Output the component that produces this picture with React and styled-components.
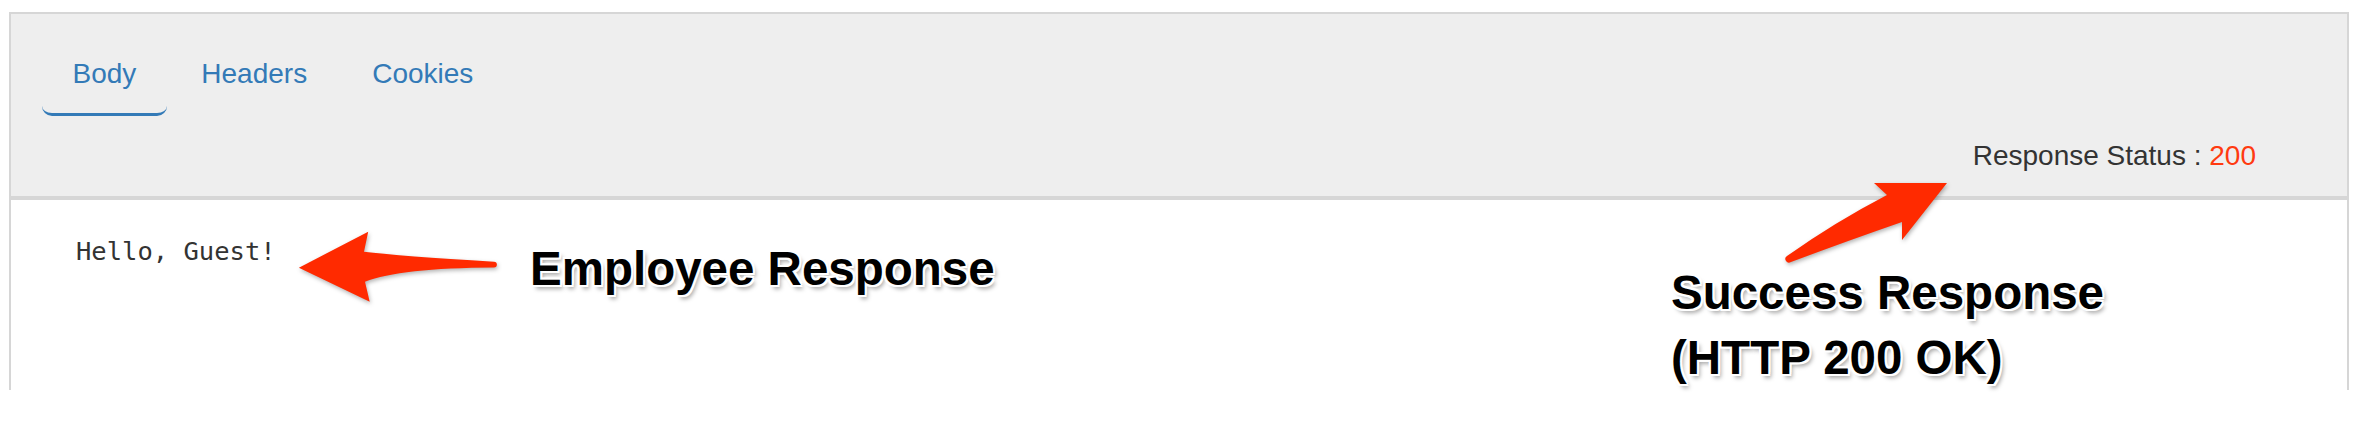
import React from "react";
import styled, { createGlobalStyle } from "styled-components";

const GlobalStyle = createGlobalStyle`
  html, body {
    margin: 0;
    padding: 0;
    background: #ffffff;
  }
  body {
    font-family: "Liberation Sans", Arial, Helvetica, sans-serif;
  }
`;

const Page = styled.div`
  position: relative;
  height: 440px;
  padding: 12px 17px 0 9px;
  box-sizing: border-box;
  overflow: hidden;
`;

const Panel = styled.div`
  height: 378px;
  border: 2px solid #d6d6d6;
  border-bottom: none;
  box-sizing: border-box;
  display: flex;
  flex-direction: column;
`;

const ResponseHeader = styled.div`
  height: 138px;
  background: #eeeeee;
  border-bottom: 4px solid #d6d6d6;
  display: flex;
  flex-direction: column;
  padding: 44px 0 0 31px;
  box-sizing: content-box;
  flex-shrink: 0;
`;

const TabList = styled.ul`
  list-style: none;
  margin: 0;
  padding: 0;
  display: flex;
  gap: 4px;
`;

const Tab = styled.li`
  padding: 0 30.5px 22.5px;
  font-size: 28px;
  line-height: 32px;
  color: #337ab7;
  border-bottom: 3px solid ${(p) => (p.$active ? "#337ab7" : "transparent")};
  border-radius: 0 0 10px 10px;
  cursor: pointer;
`;

const StatusRow = styled.div`
  margin-top: 24px;
  padding-right: 91px;
  text-align: right;
  font-size: 28px;
  line-height: 32px;
  color: #333333;
`;

const StatusCode = styled.span`
  color: #ff3a10;
`;

const ResponseBody = styled.div`
  flex: 1;
  background: #ffffff;
  padding: 36px 0 0 65px;
`;

const BodyText = styled.pre`
  margin: 0;
  font-family: "DejaVu Sans Mono", "Liberation Mono", monospace;
  font-size: 25.5px;
  line-height: 30px;
  color: #333333;
`;

const Callout = styled.div`
  position: absolute;
  left: ${(p) => p.$x}px;
  top: ${(p) => p.$y}px;
  font-family: "Liberation Sans", Arial, Helvetica, sans-serif;
  font-weight: bold;
  font-size: 47.5px;
  line-height: ${(p) => p.$lineHeight || 47.5}px;
  color: #000000;
  white-space: nowrap;
  text-shadow:
    2px 0 0 #fff, -2px 0 0 #fff, 0 2px 0 #fff, 0 -2px 0 #fff,
    2px 2px 0 #fff, -2px -2px 0 #fff, 2px -2px 0 #fff, -2px 2px 0 #fff,
    3px 4px 4px rgba(0, 0, 0, 0.35);
`;

const ArrowSvg = styled.svg`
  position: absolute;
  left: ${(p) => p.$x}px;
  top: ${(p) => p.$y}px;
  overflow: visible;
  filter: drop-shadow(1px 2px 2px rgba(0, 0, 0, 0.3));
`;

const ARROW_RED = "#ff2a00";

const LeftArrow = () => (
  <ArrowSvg $x={280} $y={220} width="240" height="100" viewBox="280 220 240 100">
    <path
      fill={ARROW_RED}
      d="M 298.9 267.7 L 368.2 231.7 L 364 251.7 Q 400 256 494 261.7 A 2.9 2.9 0 0 1 494 267.5 Q 400 268 365 281.7 L 369.7 301.7 Z"
    />
  </ArrowSvg>
);

const UpArrow = () => (
  <ArrowSvg $x={1770} $y={175} width="190" height="100" viewBox="1770 175 190 100">
    <path
      fill={ARROW_RED}
      d="M 1947 183 L 1874 183 L 1887 195 Q 1835 222 1787 256 A 3.4 3.4 0 0 0 1791 262 Q 1850 240 1902 222 L 1902 240 Z"
    />
  </ArrowSvg>
);

export default function App() {
  return (
    <>
      <GlobalStyle />
      <Page>
        <Panel>
          <ResponseHeader>
            <TabList>
              <Tab $active>Body</Tab>
              <Tab>Headers</Tab>
              <Tab>Cookies</Tab>
            </TabList>
            <StatusRow>
              Response Status : <StatusCode>200</StatusCode>
            </StatusRow>
          </ResponseHeader>
          <ResponseBody>
            <BodyText>Hello, Guest!</BodyText>
          </ResponseBody>
        </Panel>

        <LeftArrow />
        <Callout $x={530} $y={245}>Employee Response</Callout>

        <UpArrow />
        <Callout $x={1671} $y={260} $lineHeight={65}>
          Success Response
          <br />
          (HTTP 200 OK)
        </Callout>
      </Page>
    </>
  );
}
